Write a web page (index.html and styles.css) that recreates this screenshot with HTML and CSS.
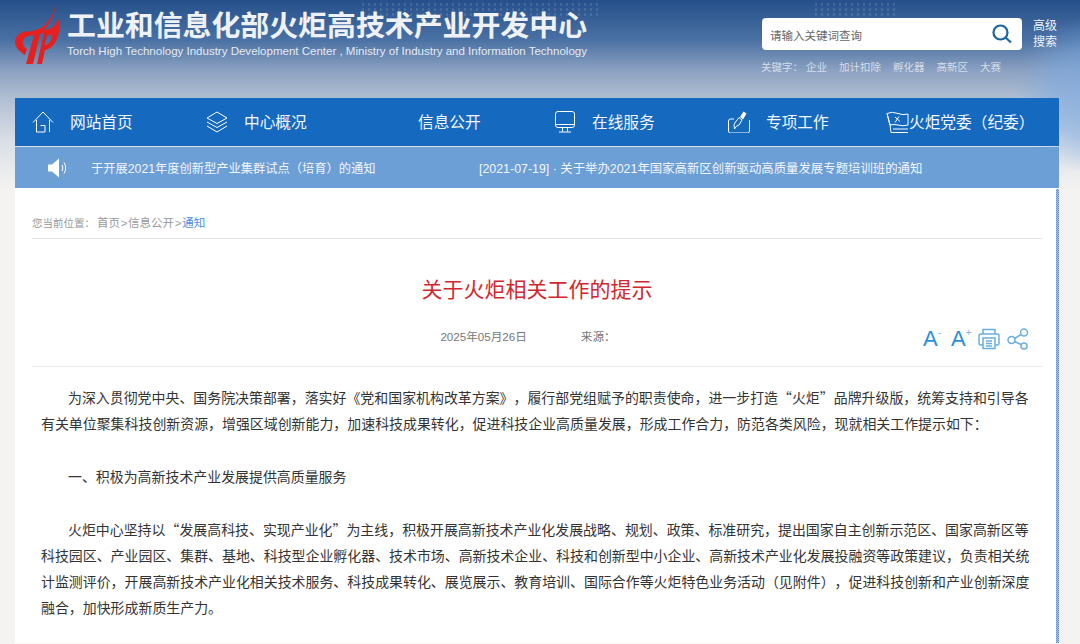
FILE: index.html
```html
<!DOCTYPE html>
<html lang="zh-CN">
<head>
    <meta charset="utf-8">
    <title>关于火炬相关工作的提示</title>
    <link rel="stylesheet" href="styles.css">
</head>
<body>
    <header class="top">
        <div class="brand">
            <svg class="logo" width="48" height="62" viewBox="14 4 48 62">
                <path fill="#e5201f" d="M26 31C19 33 15 37 15 42C15 47 19 51 25 55L27 49C24 47 22 44 23 41C24 38 26 37 28 36Z"/>
                <path fill="#e5201f" fill-rule="evenodd" d="M55 5C55 12 50 20 44 26C38 30 32 31 26 32L28 36L34 35L26 64L33 64L40 34L44 33L37 64L42 64L45 50C52 49 58 41 59 31C60 26 59 21 58 18C57 23 54 27 49 29L44 30C50 23 56 14 55 5ZM47 36L52 34C52 39 50 43 46 45L45 45Z"/>
            </svg>
            <div>
                <div class="brand-cn">工业和信息化部火炬高技术产业开发中心</div>
                <div class="brand-en">Torch High Technology Industry Development Center , Ministry of Industry and Information Technology</div>
            </div>
        </div>
        <div class="search-area">
            <div class="search-row">
                <div class="search-box">
                    <span class="search-hint">请输入关键词查询</span>
                    <svg width="20" height="20" viewBox="0 0 20 20" fill="none" stroke="#1a659f" stroke-width="2.200">
                        <circle cx="8.500" cy="8.500" r="7"/>
                        <path d="M13.500 13.500l5.500 5"/>
                    </svg>
                </div>
                <a class="adv-search">高级<br>搜索</a>
            </div>
            <div class="keywords">
                <span>关键字：</span><span>企业</span><span>加计扣除</span><span>孵化器</span><span>高新区</span><span>大赛</span>
            </div>
        </div>
    </header>

    <nav class="nav">
        <a class="nav-item nav-home">
            <svg width="22" height="22" viewBox="0 0 22 22" fill="none" stroke="#fff" stroke-width="1">
                <path d="M1 11.500L11 1L21 11.500M4.500 9V21H13V14.500H8.500M17.500 9V21"/>
            </svg>
            <span>网站首页</span>
        </a>
        <a class="nav-item nav-about">
            <svg width="22" height="22" viewBox="0 0 22 22" fill="none" stroke="#fff" stroke-width="1">
                <path d="M11 1L21 7L11 12.500L1 7ZM1 11L11 16.500L21 11M1 15L11 21L21 15"/>
            </svg>
            <span>中心概况</span>
        </a>
        <a class="nav-item nav-info"><span>信息公开</span></a>
        <a class="nav-item nav-service">
            <svg width="22" height="22" viewBox="0 0 22 22" fill="none" stroke="#fff" stroke-width="1">
                <rect x="1.500" y="0.500" width="19" height="16" rx="2.500"/>
                <path d="M1.500 13.500H20.500M8.500 16.500V20.500M13.500 16.500V20.500M5 21H17"/>
            </svg>
            <span>在线服务</span>
        </a>
        <a class="nav-item nav-special">
            <svg width="22" height="22" viewBox="0 0 22 22" fill="none" stroke="#fff" stroke-width="1">
                <path d="M6 8H2.500Q0.500 8 0.500 10V20Q0.500 22 2.500 22H19.500Q21.500 22 21.500 20V9"/>
                <path fill="#fff" stroke="none" d="M12 6L15.500 0.500L18.500 2.500L15 8.500Z"/>
                <path d="M11 6.500L14 9L11 14Q8 14.500 6.500 18Q5 13 7.500 11Z"/>
            </svg>
            <span>专项工作</span>
        </a>
        <a class="nav-item nav-party">
            <svg width="23" height="23" viewBox="0 0 23 23" fill="none" stroke="#fff" stroke-width="1">
                <path d="M1 2.500Q6 0 12 2.500Q17 4.500 22 3V14Q17 15.500 12 14Q8 13 4 14Z"/>
                <path d="M1 2.500L4 14L5 21.500H10M7 18H22M8 21.500H22M9 6L14 10.500M13 5.500L9 11.500"/>
            </svg>
            <span>火炬党委（纪委）</span>
        </a>
    </nav>

    <div class="notice">
        <svg width="21" height="20" viewBox="0 0 21 20">
            <path fill="#fff" d="M1 6.500H5L12 0.500V19.500L5 13.500H1Z"/>
            <path fill="none" stroke="#fff" d="M15 7Q17 10 15 13M17 4.500Q20.500 10 17 15.500"/>
        </svg>
        <span class="notice-one">于开展2021年度创新型产业集群试点（培育）的通知</span>
        <span>[2021-07-19] · 关于举办2021年国家高新区创新驱动高质量发展专题培训班的通知</span>
    </div>

    <main class="article">
        <div class="crumbs">
            <span class="crumbs-label">您当前位置：</span>首页<span class="crumbs-sep">&gt;</span>信息公开<span class="crumbs-sep">&gt;</span><span class="crumbs-now">通知</span>
        </div>
        <h1>关于火炬相关工作的提示</h1>
        <div class="meta">
            <span class="meta-date">2025年05月26日</span>
            <span class="meta-source">来源：</span>
            <div class="tools">
                <span class="font-btn">A<sup>-</sup></span>
                <span class="font-btn">A<sup>+</sup></span>
                <svg width="22" height="22" viewBox="0 0 22 22" fill="none" stroke="#6aaede" stroke-width="1.500">
                    <path d="M5 6V1.500H17V6M5 17H3Q1 17 1 15V8Q1 6 3 6H19Q21 6 21 8V15Q21 17 19 17H17"/>
                    <rect x="5" y="10" width="12" height="10.500"/>
                    <path d="M8 13H14M8 15.500H14M8 18H14"/>
                </svg>
                <svg width="22" height="22" viewBox="0 0 22 22" fill="none" stroke="#6aaede" stroke-width="1.500">
                    <circle cx="17" cy="4.500" r="3.500"/>
                    <circle cx="4.500" cy="12" r="3.500"/>
                    <circle cx="17" cy="18" r="3"/>
                    <path d="M14 6.500L7.500 10.500M7.500 13.500L14 16.500"/>
                </svg>
            </div>
        </div>
        <div class="body-text">
            <p>为深入贯彻党中央、国务院决策部署，落实好《党和国家机构改革方案》，履行部党组赋予的职责使命，进一步打造“火炬”品牌升级版，统筹支持和引导各有关单位聚集科技创新资源，增强区域创新能力，加速科技成果转化，促进科技企业高质量发展，形成工作合力，防范各类风险，现就相关工作提示如下：</p>
            <p>一、积极为高新技术产业发展提供高质量服务</p>
            <p>火炬中心坚持以“发展高科技、实现产业化”为主线，积极开展高新技术产业化发展战略、规划、政策、标准研究，提出国家自主创新示范区、国家高新区等科技园区、产业园区、集群、基地、科技型企业孵化器、技术市场、高新技术企业、科技和创新型中小企业、高新技术产业化发展投融资等政策建议，负责相关统计监测评价，开展高新技术产业化相关技术服务、科技成果转化、展览展示、教育培训、国际合作等火炬特色业务活动（见附件），促进科技创新和产业创新深度融合，加快形成新质生产力。</p>
        </div>
    </main>
</body>
</html>
```

FILE: styles.css
```css
html, body {
    margin: 0;
    padding: 0;
    height: 644px;
    overflow: hidden;
}
body {
    font-family: "Liberation Sans", "Noto Sans CJK SC", sans-serif;
    color: #333;
    background:
        radial-gradient(circle at 1095px 95px, rgba(125, 170, 225, 0.75) 0, rgba(125, 170, 225, 0.5) 45px, rgba(125, 170, 225, 0) 80px),
        linear-gradient(#26508b 0, #4a71a4 40px, #8aa0c0 70px, #b0bed3 98px, #d9dee6 140px, #f4f3f1 190px);
}
/* Header band */
.top {
    position: relative;
    height: 98px;
    padding: 0 23px 0 14px;
    display: flex;
    justify-content: space-between;
}
/* Faint dot texture behind the title and the search box */
.top::before,
.top::after {
    content: "";
    position: absolute;
    top: 2px;
    height: 14px;
    background: radial-gradient(circle, rgba(255, 255, 255, 0.13) 1px, transparent 1.500px) 0 0 / 6px 5px;
}
.top::before {
    left: 360px;
    width: 240px;
}
.top::after {
    left: 813px;
    width: 84px;
}
.brand {
    display: flex;
    gap: 5px;
    padding-top: 4px;
}
.brand-cn {
    margin-top: 6px;
    font-size: 28.900px;
    line-height: 32px;
    font-weight: bold;
    color: #eef2f6;
    white-space: nowrap;
}
.brand-en {
    margin-top: 2px;
    font-size: 11.520px;
    line-height: 14px;
    color: #e4eaf2;
    white-space: nowrap;
}
.search-row {
    display: flex;
    align-items: center;
    gap: 11px;
    margin-top: 18px;
}
.search-box {
    width: 260px;
    height: 32px;
    box-sizing: border-box;
    padding: 0 10px 0 8px;
    display: flex;
    align-items: center;
    justify-content: space-between;
    background: #fff;
    border-radius: 4px;
    font-size: 11.500px;
    color: #666;
}
.search-hint {
    margin-top: 2px;
}
.adv-search {
    font-size: 12px;
    line-height: 16px;
    color: #f0f3f7;
}
.keywords {
    display: flex;
    gap: 12px;
    margin-top: 10px;
    margin-left: -1px;
    font-size: 10.500px;
    line-height: 14px;
    color: #d5deea;
}
.keywords span:first-child {
    margin-right: -9px;
}
/* Main nav */
.nav {
    width: 1044px;
    height: 48px;
    box-sizing: border-box;
    margin-left: 15px;
    padding-left: 17px;
    display: flex;
    align-items: center;
    background: #1569bf;
    font-size: 15.700px;
    color: #f3f7fb;
}
.nav-item {
    display: flex;
    align-items: center;
    gap: 16px;
    white-space: nowrap;
}
.nav-item span {
    margin-top: -2px;
}
.nav-home { width: 174px; }
.nav-about { width: 212px; }
.nav-info { width: 136px; }
.nav-service { width: 174px; }
.nav-special { width: 158px; }
.nav-party { gap: 0; }
/* Notice strip */
.notice {
    width: 1044px;
    height: 41px;
    margin: 1px 0 0 15px;
    padding-left: 32px;
    box-sizing: border-box;
    display: flex;
    align-items: center;
    background: #6c9fd6;
    font-size: 12.400px;
    color: #f2f6fa;
}
.notice-one {
    width: 388px;
    margin-left: 23px;
    font-size: 12.250px;
}
/* Article */
.article {
    position: relative;
    width: 1044px;
    height: 455px;
    box-sizing: border-box;
    margin-left: 15px;
    padding: 0 17px 0 17px;
    overflow: hidden;
    background: #fff;
}
/* Dithered scroll strip on the right edge */
.article::after {
    content: "";
    position: absolute;
    top: 1px;
    right: 0;
    bottom: 0;
    width: 3px;
    background: repeating-conic-gradient(#5d93d6 0 25%, #a9c6ea 0 50%) 0 0 / 2px 2px;
}
.crumbs {
    padding: 28px 0 7px;
    border-bottom: 1px solid #e3e3e3;
    font-size: 11.500px;
    line-height: 15px;
    color: #999;
}
.crumbs-label {
    margin-right: 2px;
    font-size: 10.500px;
}
.crumbs-sep {
    margin: 0 0.700px;
}
.crumbs-now {
    color: #4a8fe0;
}
h1 {
    margin: 37px 0 24px;
    font-size: 21px;
    line-height: 28px;
    font-weight: normal;
    color: #d0282e;
    text-align: center;
}
.meta {
    height: 38px;
    position: relative;
    display: flex;
    gap: 54px;
    justify-content: center;
    padding-right: 18px;
    border-bottom: 1px solid #eaeaea;
    font-size: 11.600px;
    line-height: 18px;
    color: #777;
}
.tools {
    position: absolute;
    right: 13px;
    top: 0;
    display: flex;
    align-items: center;
    gap: 7px;
    height: 22px;
    color: #2b8fd6;
}
.font-btn {
    width: 20px;
    font-size: 22px;
    line-height: 24px;
}
.font-btn:first-child {
    width: 21px;
}
.font-btn sup {
    font-size: 10px;
    line-height: 0;
    vertical-align: 10px;
    color: #7ab8e6;
}
.body-text {
    width: 990px;
    padding: 17px 0 0 9px;
    font-family: "Noto Sans CJK SC", "Liberation Sans", sans-serif;
    font-size: 13.930px;
    line-height: 26px;
    color: #333;
    text-spacing-trim: space-all;
}
.body-text p {
    margin: 0 0 27px;
    text-indent: 27px;
}
```
